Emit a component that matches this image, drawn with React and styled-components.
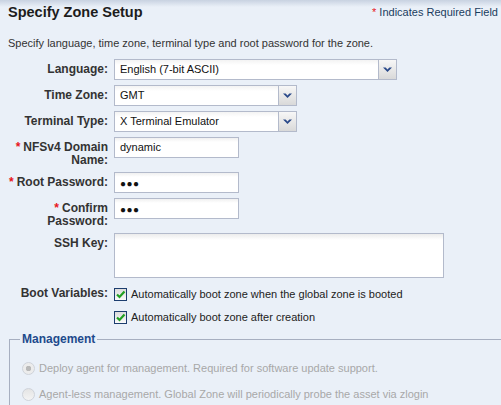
import React from 'react';
import styled, { createGlobalStyle } from 'styled-components';

const GlobalStyle = createGlobalStyle`
    html, body {
        margin: 0;
        padding: 0;
        background: #eaf0f8;
        overflow: hidden;
    }
    body {
        font-family: "Liberation Sans", Arial, sans-serif;
        font-size: 11px;
        color: #333;
    }
`;

function Chevron() {
    return (
        <svg width="9" height="6" viewBox="0 0 9 6">
            <path d="M0 0.5 H2.6 L4.5 2.4 L6.4 0.5 H9 L4.5 5 Z" fill="#2b4a8a" />
        </svg>
    );
}

function Check() {
    return (
        <svg width="11" height="11" viewBox="0 0 11 11">
            <path d="M2 5.5 L4.5 8 L9.5 2.5" fill="none" stroke="#22a022" strokeWidth="2.2" />
        </svg>
    );
}

function Select({ value, width }) {
    return (
        <SelectBox $width={width}>
            <span className="value">{value}</span>
            <span className="button"><Chevron /></span>
        </SelectBox>
    );
}

function Label({ required, children }) {
    return (
        <FieldLabel>
            {required && <span className="req">*</span>}
            {children}
        </FieldLabel>
    );
}

function App() {
    return (
        <Page>
            <GlobalStyle />
            <Header>
                <h1>Specify Zone Setup</h1>
                <span className="required"><span className="req">*</span> Indicates Required Field</span>
            </Header>
            <Intro>Specify language, time zone, terminal type and root password for the zone.</Intro>

            <Form>
                <Label>Language:</Label>
                <Select value="English (7-bit ASCII)" width={283} />

                <Label>Time Zone:</Label>
                <Select value="GMT" width={183} />

                <Label>Terminal Type:</Label>
                <Select value="X Terminal Emulator" width={183} />

                <Label required>NFSv4 Domain<br />Name:</Label>
                <TextBox $width={125}>dynamic</TextBox>

                <Label required>Root Password:</Label>
                <TextBox $width={125} $secret>●●●</TextBox>

                <Label required>Confirm<br />Password:</Label>
                <TextBox $width={125} $secret>●●●</TextBox>

                <Label>SSH Key:</Label>
                <TextArea />

                <Label>Boot Variables:</Label>
                <Checks>
                    <CheckRow>
                        <CheckBox><Check /></CheckBox>
                        Automatically boot zone when the global zone is booted
                    </CheckRow>
                    <CheckRow>
                        <CheckBox><Check /></CheckBox>
                        Automatically boot zone after creation
                    </CheckRow>
                </Checks>
            </Form>

            <Group>
                <legend>Management</legend>
                <RadioRow>
                    <Radio $selected />
                    Deploy agent for management. Required for software update support.
                </RadioRow>
                <RadioRow>
                    <Radio />
                    Agent-less management. Global Zone will periodically probe the asset via zlogin
                </RadioRow>
            </Group>
        </Page>
    );
}

export default App;

const Page = styled.div`
    width: 501px;
    height: 405px;
    overflow: hidden;
    background: linear-gradient(#c8d2e1 0, #eaf0f8 7px);
`;

const Header = styled.div`
    display: flex;
    justify-content: space-between;
    align-items: center;
    padding: 2px 3px 0 8px;
    height: 20px;

    h1 {
        margin: 0;
        font-size: 14.5px;
        font-weight: bold;
        color: #1c1c1c;
    }

    .required {
        font-size: 11px;
        color: #1a3c5e;
    }

    .req {
        color: #e8141b;
    }
`;

const Intro = styled.p`
    margin: 14px 0 0 8px;
    line-height: 14px;
    color: #333;
`;

const Form = styled.div`
    display: grid;
    grid-template-columns: 100px auto;
    justify-items: start;
    column-gap: 6px;
    row-gap: 5px;
    padding-left: 8px;
    margin-top: 9px;
`;

const FieldLabel = styled.div`
    justify-self: end;
    text-align: right;
    padding-top: 4px;
    line-height: 13px;
    font-size: 12px;
    font-weight: bold;
    color: #333;
    white-space: nowrap;

    .req {
        color: #e8141b;
        margin-right: 3px;
    }
`;

const SelectBox = styled.div`
    display: flex;
    width: ${p => p.$width}px;
    height: 21px;
    box-sizing: border-box;
    border: 1px solid #b3bacb;
    background: #fff;

    .value {
        flex: 1;
        padding-left: 5px;
        line-height: 19px;
        color: #111;
        background: linear-gradient(#f3f3f3, #fff 5px);
    }

    .button {
        width: 17px;
        display: flex;
        align-items: center;
        justify-content: center;
        border-left: 1px solid #b3bacb;
        background: linear-gradient(#f7f7f7, #d9d9d9);
    }
`;

const TextBox = styled.div`
    width: ${p => p.$width}px;
    height: 21px;
    box-sizing: border-box;
    border: 1px solid #b3bacb;
    background: linear-gradient(#f0f0f0, #fff 4px);
    padding-left: 5px;
    line-height: ${p => (p.$secret ? '21px' : '19px')};
    font-size: ${p => (p.$secret ? '10px' : '11px')};
    letter-spacing: ${p => (p.$secret ? '0.5px' : '0')};
    color: #111;
`;

const TextArea = styled.div`
    width: 330px;
    height: 45px;
    box-sizing: border-box;
    border: 1px solid #b3bacb;
    background: linear-gradient(#ececec, #fff 6px);
`;

const Checks = styled.div`
    display: flex;
    flex-direction: column;
    gap: 1px;
`;

const CheckRow = styled.div`
    display: flex;
    align-items: center;
    gap: 4px;
    height: 22px;
    color: #222;
`;

const CheckBox = styled.span`
    width: 13px;
    height: 13px;
    box-sizing: border-box;
    border: 1px solid #1c3d6e;
    background: linear-gradient(#dcdcdc, #fafafa);
    display: flex;
    align-items: center;
    justify-content: center;
`;

const Group = styled.fieldset`
    margin: 3px 0 0 9px;
    padding: 8px 0 0 12px;
    width: 600px;
    border: 1px solid #a7afc0;
    border-right: none;
    border-bottom: none;

    legend {
        padding: 0 2px;
        margin-left: -2px;
        font-size: 12px;
        line-height: 16px;
        font-weight: bold;
        color: #1e4a8c;
    }
`;

const RadioRow = styled.div`
    display: flex;
    align-items: center;
    gap: 4px;
    height: 26px;
    color: #a8a8a8;
    white-space: nowrap;
`;

const Radio = styled.span`
    width: 13px;
    height: 13px;
    box-sizing: border-box;
    border-radius: 50%;
    border: 1px solid #cfd3da;
    background: ${p => (p.$selected
        ? 'radial-gradient(circle, #b9b9b9 0 2.5px, #ececec 3px)'
        : 'linear-gradient(#e4e4e4, #f4f4f4)')};
`;
